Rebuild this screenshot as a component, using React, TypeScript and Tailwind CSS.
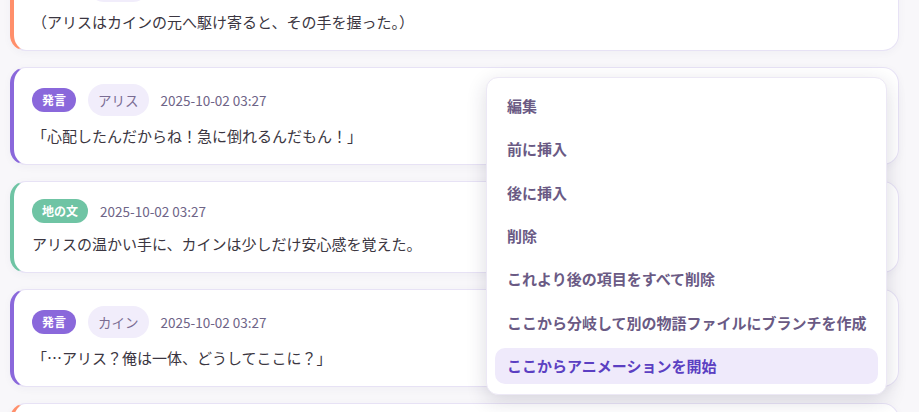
import React from "react";

type Entry = {
  kind: "action" | "speech" | "narration";
  speaker?: string;
  time: string;
  text: string;
};

const ENTRIES: Entry[] = [
  { kind: "action", speaker: "アリス", time: "2025-10-02 03:27", text: "（アリスはカインの元へ駆け寄ると、その手を握った。）" },
  { kind: "speech", speaker: "アリス", time: "2025-10-02 03:27", text: "「心配したんだからね！急に倒れるんだもん！」" },
  { kind: "narration", time: "2025-10-02 03:27", text: "アリスの温かい手に、カインは少しだけ安心感を覚えた。" },
  { kind: "speech", speaker: "カイン", time: "2025-10-02 03:27", text: "「…アリス？俺は一体、どうしてここに？」" },
  { kind: "action", speaker: "カイン", time: "2025-10-02 03:28", text: "（カインはゆっくりと体を起こした。）" },
];

const KIND = {
  action: { label: "行動", badge: "bg-[#ff8f6b]", border: "border-l-[#ff8f6b]" },
  speech: { label: "発言", badge: "bg-[#8a68db]", border: "border-l-[#8a68db]" },
  narration: { label: "地の文", badge: "bg-[#6fc4a4]", border: "border-l-[#6fc4a4]" },
};

const MENU = [
  "編集",
  "前に挿入",
  "後に挿入",
  "削除",
  "これより後の項目をすべて削除",
  "ここから分岐して別の物語ファイルにブランチを作成",
  "ここからアニメーションを開始",
];

const EntryCard = ({ entry }: { entry: Entry }) => {
  const k = KIND[entry.kind];
  return (
    <div
      className={`rounded-2xl border border-[#e7e2f5] border-l-4 ${k.border} bg-white pl-[18px] pr-5 py-4 shadow-[0_2px_8px_rgba(60,40,100,0.04)]`}
    >
      <div className="flex items-center gap-3 min-h-[26px]">
        <span className={`${k.badge} rounded-full px-2.5 h-6 flex items-center text-xs font-bold text-white`}>
          {k.label}
        </span>
        {entry.speaker && (
          <span className="rounded-full bg-[#f1edfb] px-2.5 h-8 flex items-center text-[13.5px] text-[#7a6c93]">
            {entry.speaker}
          </span>
        )}
        <span className="text-[13.5px] text-[#6e6487]">{entry.time}</span>
      </div>
      <p className="mt-2 text-[15px] leading-6 text-[#3b3641]">{entry.text}</p>
    </div>
  );
};

export default function App() {
  return (
    <div
      className="h-[412px] overflow-hidden bg-[#f8f7fa]"
      style={{ fontFamily: '"Noto Sans CJK JP", "Noto Sans", sans-serif' }}
    >
      <div className="relative -mt-[47px] pl-[10px] pr-5 flex flex-col gap-4">
        {ENTRIES.map((e, i) => (
          <EntryCard key={i} entry={e} />
        ))}

        {/* Context menu */}
        <div className="absolute left-[486px] top-[124px] w-[401px] rounded-xl border border-[#ece8f5] bg-white px-2 py-2.5 flex flex-col gap-[7.4px] shadow-[0_6px_20px_rgba(40,30,70,0.16)]">
          {MENU.map((item, i) => {
            const active = i === MENU.length - 1;
            return (
              <div
                key={item}
                className={`h-9 flex items-center px-3 rounded-[10px] whitespace-nowrap text-[15px] font-bold ${
                  active ? "bg-[#efeafb] text-[#5b3fc2]" : "text-[#6a5a84]"
                }`}
              >
                {item}
              </div>
            );
          })}
        </div>
      </div>
    </div>
  );
}
